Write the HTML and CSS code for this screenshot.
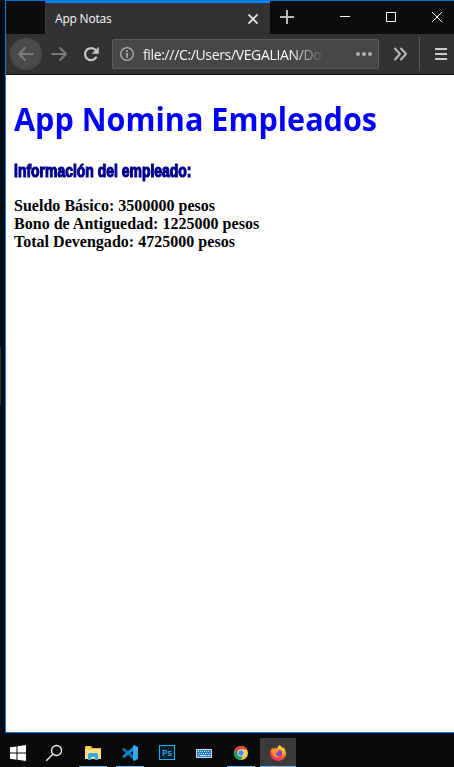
FILE: index.html
```html
<!DOCTYPE html>
<html lang="es">
<head>
<meta charset="utf-8">
<title>App Notas</title>
<link rel="stylesheet" href="styles.css">
</head>
<body>
<div class="desktop">
  <div class="window">
    <header class="titlebar">
      <div class="tab">
        <span class="tab-title">App Notas</span>
        <svg class="tab-close" width="10" height="10" viewBox="0 0 10 10"><path d="M.5 .5l9 9M9.500 .5l-9 9" stroke="#e6e6e7" stroke-width="1.9"/></svg>
      </div>
      <svg class="controls" width="184" height="33" viewBox="270 1 184 33" fill="none">
        <path d="M280 17h14M287 10v14" stroke="#b9b9ba" stroke-width="2"/>
        <path d="M340 16.5h10" stroke="#fff"/>
        <path d="M386.500 12.500h9v9h-9z" stroke="#fff"/>
        <path d="M432 12l10 10M442 12l-10 10" stroke="#fff"/>
      </svg>
    </header>
    <nav class="toolbar">
      <svg class="nav-icons" width="106" height="40" viewBox="6 34 106 40" fill="none" stroke-linecap="round" stroke-linejoin="round">
        <circle cx="26" cy="54" r="16" fill="#4a4a4c"/>
        <path d="M33 54H19M25 48l-6 6 6 6" stroke="#7b7b7d" stroke-width="2"/>
        <path d="M52 54h14M60 48l6 6-6 6" stroke="#79797b" stroke-width="2"/>
        <path d="M96 57.500A6 6 0 1 1 95.300 49.800" stroke="#c7c7c8" stroke-width="2.200"/>
        <path d="M98.500 47.500v6h-6z" fill="#c7c7c8" stroke="#c7c7c8" stroke-width=".6"/>
      </svg>
      <div class="url">
        <svg class="info" width="14" height="14" viewBox="0 0 14 14" fill="none"><circle cx="7" cy="7" r="6.300" stroke="#b1b1b2" stroke-width="1.300"/><path d="M7 3.200v1.700M7 6v4.800" stroke="#b1b1b2" stroke-width="1.700"/></svg>
        <span class="address"><span class="address-text">file:///C:/Users/VEGALIAN/Do</span></span>
        <svg class="dots" width="16" height="4" viewBox="0 0 16 4" fill="#b1b1b2"><circle cx="2" cy="2" r="2"/><circle cx="8" cy="2" r="2"/><circle cx="14" cy="2" r="2"/></svg>
      </div>
      <svg width="75" height="40" viewBox="379 34 75 40" fill="none">
        <path d="M395 48.500l5 5.500-5 5.500M401 48.500l5 5.500-5 5.500" stroke="#b9b9ba" stroke-width="2" stroke-linecap="round" stroke-linejoin="round"/>
        <path d="M419.500 37v34" stroke="#58585a"/>
        <path d="M435 49h12M435 54h12M435 59h12" stroke="#cbcbcc" stroke-width="2"/>
      </svg>
    </nav>
    <main class="page">
      <h1>App Nomina Empleados</h1>
      <h2>Información del empleado:</h2>
      <p>Sueldo Básico: 3500000 pesos<br>Bono de Antiguedad: 1225000 pesos<br>Total Devengado: 4725000 pesos</p>
    </main>
  </div>
  <footer class="taskbar">
    <div class="task"><svg width="36" height="29" viewBox="1 738 36 29"><path fill="#fff" d="M10 747.300l6.500-.9v6.100H10zM17.500 746.200l8.500-1.200v7.500h-8.500zM10 753.500h6.500v6.200l-6.500-.9zM17.500 753.500H26v7.500l-8.500-1.200z"/></svg></div>
    <div class="task"><svg width="36" height="29" viewBox="38 738 36 29" fill="none" stroke="#f2f2f2" stroke-width="1.300"><circle cx="56.500" cy="750.500" r="5"/><path d="M52.800 754.300l-6.500 6.500"/></svg></div>
    <div class="task open"><svg width="36" height="29" viewBox="75 738 36 29"><path fill="#f4b72d" d="M85 746h6l1.500 2H101v5H85z"/><path fill="#fff3ca" d="M87 747h3v1h-3z"/><path fill="#ffdf83" d="M85 749h16v10H85z"/><path fill="#35a8e4" d="M88 760v-5q0-2 2-2h6q2 0 2 2v5h-3v-3h-4v3z"/></svg></div>
    <div class="task open"><svg width="36" height="29" viewBox="112 738 36 29"><path fill="#0876b8" d="M122 749.500l2-1.500 11 8.500v4.500z"/><path fill="#168bd2" d="M122 756.500l2 1.500 11-8.500v-4.500z"/><path fill="#30a9ed" d="M134 745l4 2v12l-4 2-1-1v-14z"/></svg></div>
    <div class="task"><div class="ps">Ps</div></div>
    <div class="task"><svg width="36" height="29" viewBox="186 738 36 29"><path fill="#d5dbe2" d="M196 749h16v9h-16z"/><path fill="#257bd0" d="M197 750h14v7h-14z"/><path stroke="#cfe5fb" stroke-dasharray="1 1" d="M198 751.500h12M199 753.500h11"/><path stroke="#cfe5fb" d="M198 755.500h1M200 755.500h7M208 755.500h2"/></svg></div>
    <div class="task open"><svg width="36" height="29" viewBox="223 738 36 29"><circle cx="241" cy="753" r="7" fill="#f9cc40"/><path fill="#219b5a" d="M241 753l-6.060-3.500A7 7 0 0 0 240.500 760l3.500-5.500z"/><path fill="#db4c3f" d="M234.940 749.500A7 7 0 0 1 247.060 749.500H241l-3 5z"/><circle cx="241" cy="753" r="3.500" fill="#f3f3f3"/><circle cx="241" cy="753" r="2.700" fill="#4388ed"/></svg></div>
    <div class="task open active"><svg width="36" height="29" viewBox="260 738 36 29"><defs><linearGradient id="fx" x1=".8" y1="0" x2=".3" y2="1"><stop stop-color="#fff044"/><stop offset=".4" stop-color="#ffa51f"/><stop offset=".7" stop-color="#ff493f"/><stop offset="1" stop-color="#e72474"/></linearGradient></defs><path fill="url(#fx)" d="M279.500 745q2 1.300 2.700 3l1.300-.8q2.500 3 2.500 6.300a8 7.500 0 0 1-16 0q0-4 2.500-6l.5 1.500 2-1 2 .5q.7-2 2.500-3.500z"/><circle cx="278.500" cy="753" r="3.500" fill="#8440d5"/><path fill="#ff9420" d="M272 749.500q3-1.500 5.500 0l2 .8-2.500 2-1.500 2q1 2 4 1.500-3 3-6 0-2-3-1.500-6.300z"/></svg></div>
  </footer>
</div>
</body>
</html>
```

FILE: styles.css
```css
* { box-sizing: border-box; }
body { margin: 0; }
svg { display: block; flex: none; }

.desktop {
  width: 454px;
  height: 767px;
  overflow: hidden;
  display: flex;
  flex-direction: column;
  background: linear-gradient(#2c2f38, #2c2f38) 0 347px / 1px 58px no-repeat, #070b11;
}

.window {
  height: 733px;
  margin-left: 5px;
  border: solid #0078d7;
  border-width: 1px 0 1px 1px;
  display: flex;
  flex-direction: column;
}

.titlebar {
  height: 33px;
  padding-left: 39px;
  display: flex;
  background: #0c0c0c;
}

.tab {
  width: 225px;
  padding: 0 12px 0 9px;
  border-top: 2px solid #0a84ff;
  border-left: 1px solid #3c3c3e;
  display: flex;
  align-items: center;
  justify-content: space-between;
  background: #323234;
  color: #f9f9fa;
}

.tab-title {
  font: 12px/16px "Open Sans", sans-serif;
  letter-spacing: -.2px;
  padding-top: 1px;
}

.toolbar {
  height: 41px;
  border-bottom: 1px solid #0c0c0d;
  display: flex;
  align-items: center;
  background: #323234;
}

.url {
  width: 267px;
  height: 30px;
  padding: 0 6px 0 7px;
  border: 1px solid #5c5c5e;
  border-radius: 2px;
  display: flex;
  align-items: center;
  background: #474749;
}

.address {
  width: 180px;
  margin: 0 33px 0 9px;
  padding-top: 2px;
  overflow: hidden;
  -webkit-mask-image: linear-gradient(90deg, #000 150px, transparent 181px);
  mask-image: linear-gradient(90deg, #000 150px, transparent 181px);
}

.address-text {
  display: inline-block;
  white-space: nowrap;
  color: #f9f9fa;
  font: 14px/20px "Open Sans", sans-serif;
  letter-spacing: -.35px;
}

.page {
  flex: 1;
  padding: 23px 8px;
  background: #fff;
}

h1, h2, p { margin: 0; white-space: nowrap; transform-origin: left; }

h1 {
  font: bold 32px/42px "Open Sans", sans-serif;
  color: #00f;
  transform: scaleX(.955);
}

h2 {
  margin-top: 21px;
  font: bold 17.5px/20px "Liberation Sans Narrow", "Liberation Sans", sans-serif;
  color: #00008b;
  -webkit-text-stroke: 1.2px #00008b;
  transform: scaleX(.797);
}

p {
  margin-top: 16px;
  font: bold 16px/18px "Liberation Serif", serif;
  letter-spacing: .02px;
  color: #000;
}

.taskbar {
  height: 29px;
  margin-top: 5px;
  padding-left: 1px;
  display: flex;
  gap: 1px;
  background: #0a0a0a;
}

.task {
  position: relative;
  width: 36px;
  height: 29px;
  display: flex;
  justify-content: center;
}

.open::after {
  content: "";
  position: absolute;
  left: 4px;
  right: 4px;
  bottom: 0;
  height: 1px;
  background: #76b9ed;
}

.active { background: #3b3b3b; }
.active::after { left: 0; right: 0; }

.ps {
  width: 16px;
  height: 15px;
  margin-top: 7px;
  border: 1px solid #16b5ef;
  background: #061e2b;
  color: #16b5ef;
  font: 600 9px/13px "Open Sans", sans-serif;
  text-align: center;
}
```
